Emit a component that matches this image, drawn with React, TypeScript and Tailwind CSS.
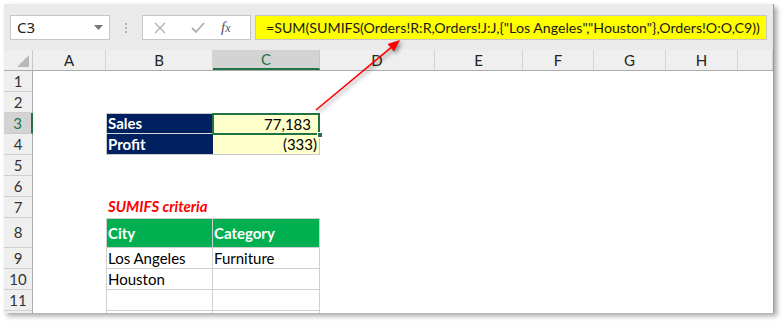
import React from "react";

const colHeads = [
  { l: "A", w: "w-[73px]" },
  { l: "B", w: "w-[107px]" },
  { l: "C", w: "w-[107px]", sel: true },
  { l: "D", w: "w-[115px]" },
  { l: "E", w: "w-[88px]" },
  { l: "F", w: "w-[71px]" },
  { l: "G", w: "w-[72px]" },
  { l: "H", w: "w-[72px]" },
  { l: "", w: "flex-1" },
];

const formula = '=SUM(SUMIFS(Orders!R:R,Orders!J:J,{"Los Angeles","Houston"},Orders!O:O,C9))';

const RowHead = ({ n, sel }: { n: number | string; sel?: boolean }) => (
  <div
    className={
      sel
        ? "w-[29px] shrink-0 flex items-center justify-center bg-[#d3d3d3] border-b border-[#c8c8c8] border-r-2 border-r-[#217346] text-[15px] text-[#217346]"
        : "w-[29px] shrink-0 flex items-center justify-center bg-[#efefef] border-b border-[#d0d0d0] border-r border-r-[#ababab] text-[15px] text-[#333]"
    }
  >
    {n}
  </div>
);

const Spacer = () => <div className="w-[73px] shrink-0" />;

export default function App() {
  return (
    <div className="w-[783px] h-[322px] bg-white pt-1 pl-1 font-['Lato',sans-serif]">
      <div className="relative w-[770px] h-[309px] overflow-hidden bg-[#eaeaea] border-r border-[#9a9a9a] shadow-[3px_3px_5px_rgba(0,0,0,0.35)] flex flex-col">
        {/* formula bar */}
        <div className="h-[46px] shrink-0 flex items-start pt-[11px] pl-[6px]">
          <div className="w-[100px] h-[25px] bg-white border border-[#c6c6c6] flex items-center justify-between pl-[6px] pr-[6px] text-[15px] text-[#222] font-['Noto_Sans',sans-serif]">
            <span>C3</span>
            <svg width="9" height="5" viewBox="0 0 9 5">
              <path d="M0 0 L9 0 L4.5 5 Z" fill="#777" />
            </svg>
          </div>
          <div className="ml-[15px] mt-[8px] flex flex-col gap-[2px]">
            <div className="w-[2px] h-[2px] bg-[#b4b4b4]" />
            <div className="w-[2px] h-[2px] bg-[#b4b4b4]" />
            <div className="w-[2px] h-[2px] bg-[#b4b4b4]" />
          </div>
          <div className="ml-[15px] w-[109px] h-[25px] bg-white border border-[#c6c6c6] flex items-center">
            <svg className="ml-[11px]" width="12" height="12" viewBox="0 0 12 12">
              <path d="M1 1 L11 11 M11 1 L1 11" stroke="#b0b0b0" strokeWidth="1.4" />
            </svg>
            <svg className="ml-[25px]" width="14" height="12" viewBox="0 0 14 12">
              <path d="M1 6 L5 10 L13 1" stroke="#b0b0b0" strokeWidth="1.8" fill="none" />
            </svg>
            <span className="ml-[16px] font-['Liberation_Serif',serif] italic text-[15px] text-[#555] leading-none">
              f<span className="text-[12px]">x</span>
            </span>
          </div>
          <div className="ml-[4px] w-[512px] h-[25px] bg-[#ffff00] border border-[#c6c6c6] flex items-center pl-[10px] text-[14.2px] text-[#1a1a1a] whitespace-nowrap overflow-hidden">
            {formula}
          </div>
        </div>

        {/* column headers */}
        <div className="h-[21px] shrink-0 flex bg-[#efefef] border-b border-[#ababab]">
          <div className="w-[29px] shrink-0 relative border-r border-[#c8c8c8]">
            <svg className="absolute right-[3px] bottom-[3px]" width="12" height="12" viewBox="0 0 12 12">
              <path d="M12 0 L12 12 L0 12 Z" fill="#b9b9b9" />
            </svg>
          </div>
          {colHeads.map((c, i) => (
            <div
              key={i}
              className={
                c.sel
                  ? `${c.w} shrink-0 flex items-center justify-center bg-[#d3d3d3] border-r border-[#c8c8c8] border-b-2 border-b-[#217346] text-[15px] text-[#217346]`
                  : `${c.w} shrink-0 flex items-center justify-center border-r border-[#d4d4d4] text-[15px] text-[#222]`
              }
            >
              {c.l}
            </div>
          ))}
        </div>

        {/* grid */}
        <div className="flex-1 bg-white text-[15px] text-black">
          <div className="h-[21px] flex"><RowHead n={1} /></div>
          <div className="h-[21px] flex"><RowHead n={2} /></div>
          <div className="h-[21px] flex">
            <RowHead n={3} sel />
            <Spacer />
            <div className="w-[107px] shrink-0 bg-[#002060] border-l border-t border-b border-[#c8c8c8] border-b-[#d9d9d9] text-white font-bold flex items-center pl-[1px]">Sales</div>
            <div className="relative w-[107px] shrink-0 bg-[#ffffcc] border-t border-r border-[#c8c8c8] flex items-center justify-end pr-[8px]">
              77,183
              <div className="absolute -inset-px border-2 border-[#217346] z-10" />
              <div className="absolute -right-[4px] -bottom-[4px] w-[6px] h-[6px] bg-[#217346] border border-white z-20" />
            </div>
          </div>
          <div className="h-[21px] flex">
            <RowHead n={4} />
            <Spacer />
            <div className="w-[107px] shrink-0 bg-[#002060] border-l border-b border-[#c8c8c8] text-white font-bold flex items-center pl-[1px]">Profit</div>
            <div className="w-[107px] shrink-0 bg-[#ffffcc] border-r border-b border-[#c8c8c8] flex items-center justify-end pr-[2px]">(333)</div>
          </div>
          <div className="h-[21px] flex"><RowHead n={5} /></div>
          <div className="h-[21px] flex"><RowHead n={6} /></div>
          <div className="h-[21px] flex">
            <RowHead n={7} />
            <Spacer />
            <div className="w-[107px] shrink-0 flex items-end pl-[2px] pb-[1px] text-[#ff0000] font-bold italic whitespace-nowrap">SUMIFS criteria</div>
          </div>
          <div className="h-[30px] flex">
            <RowHead n={8} />
            <Spacer />
            <div className="w-[107px] shrink-0 bg-[#00b050] border-l border-t border-r border-b border-[#d0d0d0] text-white font-bold flex items-center pl-[1px]">City</div>
            <div className="w-[107px] shrink-0 bg-[#00b050] border-t border-r border-b border-[#d0d0d0] text-white font-bold flex items-center pl-[1px]">Category</div>
          </div>
          {[
            [9, "Los Angeles", "Furniture"],
            [10, "Houston", ""],
            [11, "", ""],
            ["", "", ""],
          ].map(([n, b, c], i) => (
            <div key={i} className="h-[21px] flex">
              <RowHead n={n} />
              <Spacer />
              <div className="w-[107px] shrink-0 border-l border-r border-b border-[#d0d0d0] flex items-center pl-[1px]">{b}</div>
              <div className="w-[107px] shrink-0 border-r border-b border-[#d0d0d0] flex items-center pl-[1px]">{c}</div>
            </div>
          ))}
        </div>

        {/* callout arrow */}
        <svg
          className="absolute inset-0 pointer-events-none drop-shadow-[2px_2px_2px_rgba(0,0,0,0.45)]"
          width="770"
          height="309"
          viewBox="0 0 770 309"
        >
          <line x1="312" y1="106" x2="387" y2="43.7" stroke="#ff0000" strokeWidth="1.6" />
          <path d="M396 36 L390 47.5 L383.6 39.9 Z" fill="#ff0000" />
        </svg>
      </div>
    </div>
  );
}
